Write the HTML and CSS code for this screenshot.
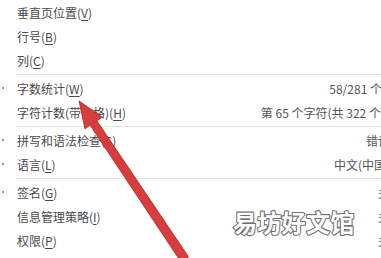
FILE: index.html
```html
<!DOCTYPE html>
<html lang="zh-CN">
<head>
<meta charset="utf-8">
<link rel="stylesheet" href="styles.css">
</head>
<body>
<div class="page">
  <div class="menu">
    <div class="item"><span class="check"></span><span class="label">垂直页位置(<u>V</u>)</span><span class="value"></span></div>
    <div class="item"><span class="check"></span><span class="label">行号(<u>B</u>)</span><span class="value"></span></div>
    <div class="item"><span class="check"></span><span class="label">列(<u>C</u>)</span><span class="value"></span></div>
    <div class="sep"></div>
    <div class="item"><span class="check on"></span><span class="label">字数统计(<u>W</u>)</span><span class="value value-count">58/281 个字</span></div>
    <div class="item"><span class="check"></span><span class="label">字符计数(带空格)(<u>H</u>)</span><span class="value value-long">第 65 个字符(共 322 个字符)</span></div>
    <div class="sep"></div>
    <div class="item"><span class="check on"></span><span class="label">拼写和语法检查(<u>S</u>)</span><span class="value">错误</span></div>
    <div class="item"><span class="check on"></span><span class="label">语言(<u>L</u>)</span><span class="value">中文(中国)</span></div>
    <div class="sep"></div>
    <div class="item"><span class="check on"></span><span class="label">签名(<u>G</u>)</span><span class="value">关</span></div>
    <div class="item"><span class="check"></span><span class="label">信息管理策略(<u>I</u>)</span><span class="value">关</span></div>
    <div class="item"><span class="check"></span><span class="label">权限(<u>P</u>)</span><span class="value">关</span></div>
  </div>
  <svg class="watermark" width="130" height="34" viewBox="0 0 130 34">
    <text x="2" y="25" class="wm-text">易坊好文馆</text>
  </svg>
  <svg class="arrow" width="381" height="258" viewBox="0 0 381 258">
    <polygon points="79,101 102,117 97,121 188,256 188,262 181,262 90,125 85,129" fill="#d83c3c" stroke="#a82424" stroke-width="0.8" stroke-linejoin="round"/>
  </svg>
</div>
</body>
</html>
```

FILE: styles.css
```css
html, body {
  margin: 0;
  padding: 0;
  background: #ffffff;
  overflow: hidden;
}

.page {
  position: relative;
  width: 381px;
  height: 258px;
  overflow: hidden;
  font-family: "Noto Sans CJK SC", "Microsoft YaHei", sans-serif;
  font-size: 12px;
  color: #4a4a4a;
}

.menu {
  width: 390px;
  padding-top: 1px;
}

.item {
  display: flex;
  align-items: center;
  height: 24px;
  line-height: 24px;
  white-space: nowrap;
}

.check {
  width: 17px;
  flex: none;
  display: flex;
  align-items: center;
  height: 24px;
}

.check.on::before {
  content: "";
  display: block;
  width: 2px;
  height: 2px;
  margin-left: 2px;
  margin-top: -3px;
  background: #777;
  border-radius: 1px;
}

.label {
  flex: 1;
}

.label u {
  text-decoration-thickness: 1px;
  text-underline-offset: 2px;
}

.value {
  text-align: right;
  color: #555;
}

.value-count {
  margin-right: -4px;
}

.value-long {
  margin-right: -19px;
}

.sep {
  height: 1px;
  margin: 1px 0 2px 16px;
  background: #e2e2e2;
}

.watermark {
  position: absolute;
  left: 231px;
  top: 207px;
  overflow: visible;
}

.wm-text {
  font-family: "Noto Sans CJK SC", sans-serif;
  font-size: 24px;
  font-weight: 700;
  letter-spacing: 0.3px;
  fill: #ffffff;
  stroke: #707070;
  stroke-width: 2.2px;
  stroke-linejoin: round;
  paint-order: stroke fill;
}

.arrow {
  position: absolute;
  left: 0;
  top: 0;
  pointer-events: none;
}
```
